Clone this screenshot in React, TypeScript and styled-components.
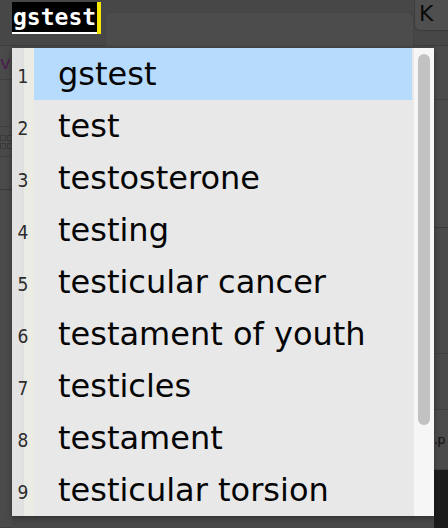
import React from "react";
import styled, { createGlobalStyle } from "styled-components";

const Global = createGlobalStyle`
  html, body { margin: 0; padding: 0; background: #4a4a4a; }
  body { width: 448px; height: 528px; overflow: hidden; font-family: "DejaVu Sans", sans-serif; }
`;

const Page = styled.div`
  position: relative;
  width: 448px;
  height: 528px;
  background: #4a4a4a;
  display: flex;
  flex-direction: column;
  overflow: hidden;
`;

const TopBar = styled.div`
  height: 46px;
  display: flex;
  align-items: flex-start;
  background: #474747;
  border-bottom: 1px solid #3d3d3d;
  box-sizing: border-box;
`;

const InputBox = styled.div`
  margin: 2px 0 0 12px;
  height: 32px;
  display: flex;
  align-items: stretch;
`;

const InputText = styled.span`
  background: #000;
  color: #fff;
  font-family: "DejaVu Sans Mono", monospace;
  font-weight: bold;
  font-size: 23px;
  line-height: 30px;
  padding: 0 1px;
  box-shadow: inset 0 -2px 0 #fff;
`;

const Caret = styled.span`
  width: 4px;
  background: #f7e600;
`;

const Panel = styled.div`
  flex: 1;
  margin: 12px 0 0 4px;
  height: 34px;
  background: #4c4c4c;
  border: 1px solid #434343;
  border-bottom: none;
  border-radius: 6px 6px 0 0;
`;

const KButton = styled.div`
  width: 34px;
  height: 31px;
  background: #4f4f4f;
  border: 1px solid #3c3c3c;
  border-top: none;
  border-right: none;
  border-radius: 0 0 0 6px;
  box-sizing: border-box;
  color: #0a0a0a;
  font-size: 22px;
  line-height: 28px;
  padding-left: 4px;
  overflow: hidden;
`;

const Body = styled.div`
  flex: 1;
  display: flex;
`;

const Strip = styled.div<{ $w: number }>`
  width: ${(p) => p.$w}px;
  display: flex;
  flex-direction: column;
  overflow: hidden;
`;

const Section = styled.div<{ $h: number; $bg?: string; $line?: string }>`
  height: ${(p) => p.$h}px;
  flex: ${(p) => (p.$h === 0 ? 1 : "none")};
  background: ${(p) => p.$bg || "#4a4a4a"};
  border-bottom: 1px solid ${(p) => p.$line || "#404040"};
  box-sizing: border-box;
  display: flex;
  align-items: center;
  font-size: 18px;
  color: #4a1f4f;
  overflow: hidden;
  white-space: nowrap;
`;

const Tail = styled.span`
  color: #111;
  font-size: 13px;
  letter-spacing: -1px;
`;

const Squares = styled.div`
  display: grid;
  grid-template-columns: 6px 6px;
  gap: 2px 1px;
  & span {
    width: 4px;
    height: 4px;
    border: 1px solid #3a3a3a;
  }
`;

const Main = styled.div`
  flex: 1;
  background: #484848;
`;

const Popup = styled.div`
  position: absolute;
  left: 12px;
  top: 48px;
  width: 422px;
  height: 468px;
  display: flex;
  background: #e8e8e8;
  box-shadow: 0 2px 6px rgba(0, 0, 0, 0.35);
`;

const Gutter = styled.div`
  width: 22px;
  background: linear-gradient(to right, #e2e2e2 0, #e2e2e2 10px, #d8d8d6 11px, #ebebe6 12px, #ecece4 22px);
  display: flex;
  flex-direction: column;
`;

const Num = styled.div`
  height: 52px;
  display: flex;
  align-items: center;
  justify-content: center;
  padding-top: 3px;
  box-sizing: border-box;
  font-family: "DejaVu Sans Condensed", "DejaVu Sans", sans-serif;
  font-stretch: condensed;
  font-size: 19px;
  color: #2c2c2c;
`;

const List = styled.div`
  flex: 1;
  display: flex;
  flex-direction: column;
`;

const Row = styled.div<{ $sel?: boolean }>`
  height: 52px;
  margin-right: 2px;
  padding-left: 24px;
  display: flex;
  align-items: center;
  background: ${(p) => (p.$sel ? "#b6dbfc" : "transparent")};
  font-family: "DejaVu Sans", sans-serif;
  font-size: 32px;
  color: #050505;
  white-space: nowrap;
`;

const Track = styled.div`
  width: 20px;
  background: #f6f6f6;
  padding: 6px 4px 0;
  box-sizing: border-box;
`;

const Thumb = styled.div`
  height: 371px;
  background: #c2c2c2;
  border-radius: 6px;
`;

const items = [
  "gstest",
  "test",
  "testosterone",
  "testing",
  "testicular cancer",
  "testament of youth",
  "testicles",
  "testament",
  "testicular torsion",
];

export default function App() {
  return (
    <>
      <Global />
      <Page>
        <TopBar>
          <InputBox>
            <InputText>gstest</InputText>
            <Caret />
          </InputBox>
          <Panel />
          <KButton>K</KButton>
        </TopBar>
        <Body>
          <Strip $w={12}>
            <Section $h={34}>v</Section>
            <Section $h={47} />
            <Section $h={30}>
              <Squares>
                <span />
                <span />
                <span />
                <span />
              </Squares>
            </Section>
            <Section $h={33} $line="#3a3a3a" />
            <Section $h={0} $bg="#4b4b4b" />
          </Strip>
          <Main />
          <Strip $w={14}>
            <Section $h={54} $bg="#4b4b4b" />
            <Section $h={128} $bg="#4c4c4c" $line="#3a3a3a" />
            <Section $h={126} $bg="#4a4a4a" />
            <Section $h={56} $bg="#4a4a4a" />
            <Section $h={60} $bg="#4b4b4b">
              <Tail>.p</Tail>
            </Section>
            <Section $h={0} $bg="#1c1c1c" $line="#1c1c1c" />
          </Strip>
        </Body>
        <Popup>
          <Gutter>
            {items.map((_, i) => (
              <Num key={i}>{i + 1}</Num>
            ))}
          </Gutter>
          <List>
            {items.map((t, i) => (
              <Row key={t} $sel={i === 0}>
                {t}
              </Row>
            ))}
          </List>
          <Track>
            <Thumb />
          </Track>
        </Popup>
      </Page>
    </>
  );
}
